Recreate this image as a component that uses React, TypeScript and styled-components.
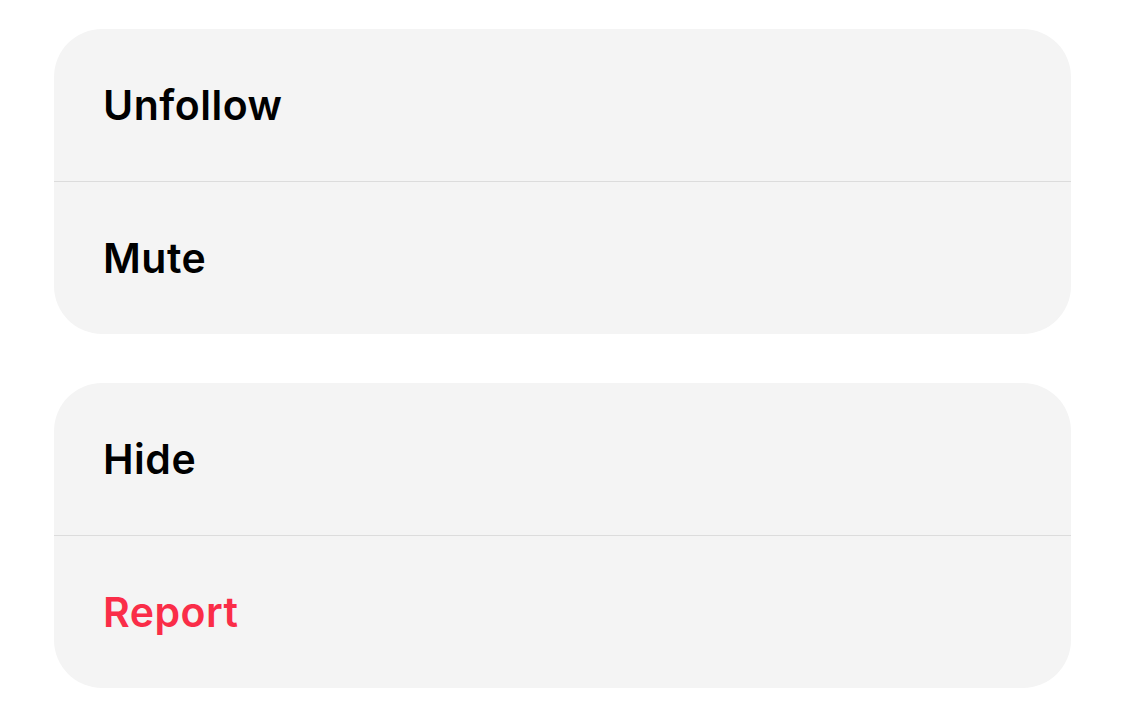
import React from "react";
import styled, { createGlobalStyle } from "styled-components";

const Global = createGlobalStyle`
  html, body { margin: 0; padding: 0; background: #ffffff; }
  body { font-family: Inter, "Noto Sans", sans-serif; -webkit-font-smoothing: antialiased; }
`;

const Page = styled.div`
  display: flex;
  flex-direction: column;
  gap: 49px;
  padding: 29px 54px 0 54px;
`;

const Card = styled.div`
  background: #f4f4f4;
  border-radius: 48px;
  overflow: hidden;
  display: flex;
  flex-direction: column;
`;

const Row = styled.div<{ $danger?: boolean }>`
  height: 152px;
  display: flex;
  align-items: center;
  padding-left: 49px;
  font-size: 41px;
  font-weight: 600;
  letter-spacing: 0.5px;
  color: ${(p) => (p.$danger ? "#fa2d48" : "#000000")};
  & + & {
    border-top: 1px solid #dcdcdc;
  }
`;

export default function App() {
  return (
    <>
      <Global />
      <Page>
        <Card>
          <Row>Unfollow</Row>
          <Row>Mute</Row>
        </Card>
        <Card>
          <Row>Hide</Row>
          <Row $danger>Report</Row>
        </Card>
      </Page>
    </>
  );
}
